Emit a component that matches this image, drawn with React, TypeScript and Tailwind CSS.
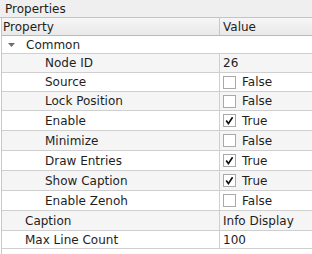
type Row = {
  label: string;
  value?: string;
  check?: boolean;
  indent: "child" | "top";
  h: string;
};

const rows: Row[] = [
  { label: "Node ID", value: "26", indent: "child", h: "h-[19px]" },
  { label: "Source", value: "False", check: false, indent: "child", h: "h-[19px]" },
  { label: "Lock Position", value: "False", check: false, indent: "child", h: "h-[19px]" },
  { label: "Enable", value: "True", check: true, indent: "child", h: "h-[20px]" },
  { label: "Minimize", value: "False", check: false, indent: "child", h: "h-[20px]" },
  { label: "Draw Entries", value: "True", check: true, indent: "child", h: "h-[20px]" },
  { label: "Show Caption", value: "True", check: true, indent: "child", h: "h-[20px]" },
  { label: "Enable Zenoh", value: "False", check: false, indent: "child", h: "h-[20px]" },
  { label: "Caption", value: "Info Display", indent: "top", h: "h-[20px]" },
  { label: "Max Line Count", value: "100", indent: "top", h: "h-[18px]" },
];

function CheckBox({ checked }: { checked: boolean }) {
  return (
    <span className="flex h-[13px] w-[13px] shrink-0 items-center justify-center border border-[#a9a9a9] bg-white">
      {checked && (
        <svg width="11" height="11" viewBox="0 0 11 11">
          <path d="M2.2 5.6 L4.4 8.6 L8.6 2.2" fill="none" stroke="#111" strokeWidth="1.7" />
        </svg>
      )}
    </span>
  );
}

export default function App() {
  return (
    <div
      className="flex h-[254px] w-[312px] flex-col overflow-hidden bg-white text-[12px] leading-none text-[#1e1e1e]"
      style={{ fontFamily: '"DejaVu Sans", "Liberation Sans", sans-serif' }}
    >
      <div className="flex h-[18px] shrink-0 items-center border-b border-[#c4c4c4] bg-[#efefef] pl-[5px]">
        Properties
      </div>

      <div className="ml-px flex flex-1 flex-col border-l border-[#c8c8c8]">
        <div className="grid h-[18px] shrink-0 grid-cols-[218px_1fr] border-b border-[#b9b9b9] bg-gradient-to-b from-[#f6f6f6] to-[#e9e9e9]">
          <div className="flex items-center border-r border-[#c8c8c8] pl-px">Property</div>
          <div className="flex items-center pl-[3px]">Value</div>
        </div>

        <div className="flex h-[18px] shrink-0 items-center border-b border-[#cfcfcf] bg-white">
          <svg width="7" height="4" viewBox="0 0 7 4" className="ml-[6px]">
            <path d="M0 0 L7 0 L3.5 4 Z" fill="#6e6e6e" />
          </svg>
          <span className="ml-[11px]">Common</span>
        </div>

        {rows.map((r, i) => (
          <div
            key={r.label}
            className={`grid ${r.h} shrink-0 grid-cols-[218px_1fr] border-b border-[#cfcfcf] ${
              i % 2 === 0 ? "bg-[#f5f5f5]" : "bg-white"
            }`}
          >
            <div
              className={`flex items-center border-r border-[#cfcfcf] ${
                r.indent === "child" ? "pl-[43px]" : "pl-[23px]"
              }`}
            >
              {r.label}
            </div>
            <div className="flex items-center pl-[3px]">
              {r.check !== undefined ? (
                <span className="flex items-center">
                  <CheckBox checked={r.check} />
                  <span className="ml-[6px]">{r.value}</span>
                </span>
              ) : (
                r.value
              )}
            </div>
          </div>
        ))}
      </div>
    </div>
  );
}
